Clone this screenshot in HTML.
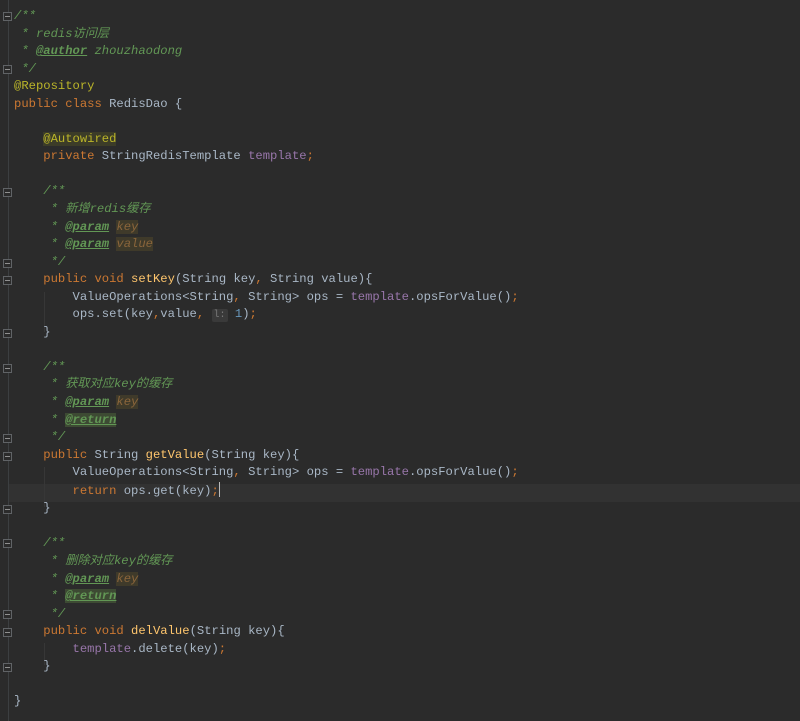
<!DOCTYPE html>
<html><head><meta charset="utf-8"><style>
html,body{margin:0;padding:0;background:#2b2b2b;width:800px;height:721px;overflow:hidden}
.gut{position:absolute;left:8px;top:0;width:1px;height:721px;background:#3c3f41}
.cur{position:absolute;left:9px;top:484px;width:791px;height:17.5px;background:#323232}
.code{position:absolute;left:14px;top:8px;font-family:"Liberation Mono","Noto Sans CJK SC",monospace;font-size:12.2px;line-height:17.55px;color:#a9b7c6;white-space:pre}
.c{color:#629755;font-style:italic}
.t{color:#629755;font-weight:bold;font-style:italic;text-decoration:underline}
.tb{background:#3d4a33}
.p{color:#8a653b;background:#3f3a2a;font-style:italic}
.k{color:#cc7832}
.a{color:#bbb529}
.ab{background:#3c3c28}
.m{color:#ffc66d}
.f{color:#9876aa}
.n{color:#6897bb}
.h{display:inline-block;background:#3a3a3a;color:#787878;font-size:10px;padding:0 2px;border-radius:2px;line-height:13px}
.fold{position:absolute;left:3px;width:9px;height:9px;border:1px solid #606366;background:#2b2b2b;box-sizing:border-box}
.fold:after{content:"";position:absolute;left:1px;top:3px;width:5px;height:1px;background:#909090}
.caret{display:inline-block;width:1px;height:15px;background:#bbb;vertical-align:-3px}
.ig{position:absolute;left:44px;width:1px;background:#373737}
</style></head><body>
<div class="gut"></div>
<div class="cur"></div>
<div class="ig" style="top:292px;height:40px"></div>
<div class="ig" style="top:467px;height:40px"></div>
<div class="ig" style="top:643px;height:22px"></div>
<div class="fold" style="top:12px"></div>
<div class="fold" style="top:65px"></div>
<div class="fold" style="top:188px"></div>
<div class="fold" style="top:259px"></div>
<div class="fold" style="top:276px"></div>
<div class="fold" style="top:329px"></div>
<div class="fold" style="top:364px"></div>
<div class="fold" style="top:434px"></div>
<div class="fold" style="top:452px"></div>
<div class="fold" style="top:505px"></div>
<div class="fold" style="top:539px"></div>
<div class="fold" style="top:610px"></div>
<div class="fold" style="top:628px"></div>
<div class="fold" style="top:663px"></div>
<div class="code"><span class="c">/**
 * redis访问层
 * <span class="t">@author</span> zhouzhaodong
 */</span>
<span class="a">@Repository</span>
<span class="k">public class</span> RedisDao {

    <span class="a ab">@Autowired</span>
    <span class="k">private</span> StringRedisTemplate <span class="f">template</span><span class="k">;</span>

    <span class="c">/**
     * 新增redis缓存
     * <span class="t">@param</span> <span class="p">key</span>
     * <span class="t">@param</span> <span class="p">value</span>
     */</span>
    <span class="k">public void</span> <span class="m">setKey</span>(String key<span class="k">,</span> String value){
        ValueOperations&lt;String<span class="k">,</span> String&gt; ops = <span class="f">template</span>.opsForValue()<span class="k">;</span>
        ops.set(key<span class="k">,</span>value<span class="k">,</span> <span class="h">l:</span> <span class="n">1</span>)<span class="k">;</span>
    }

    <span class="c">/**
     * 获取对应key的缓存
     * <span class="t">@param</span> <span class="p">key</span>
     * <span class="t tb">@return</span>
     */</span>
    <span class="k">public</span> String <span class="m">getValue</span>(String key){
        ValueOperations&lt;String<span class="k">,</span> String&gt; ops = <span class="f">template</span>.opsForValue()<span class="k">;</span>
        <span class="k">return</span> ops.get(key)<span class="k">;</span><span class="caret"></span>
    }

    <span class="c">/**
     * 删除对应key的缓存
     * <span class="t">@param</span> <span class="p">key</span>
     * <span class="t tb">@return</span>
     */</span>
    <span class="k">public void</span> <span class="m">delValue</span>(String key){
        <span class="f">template</span>.delete(key)<span class="k">;</span>
    }

}</div>
</body></html>
